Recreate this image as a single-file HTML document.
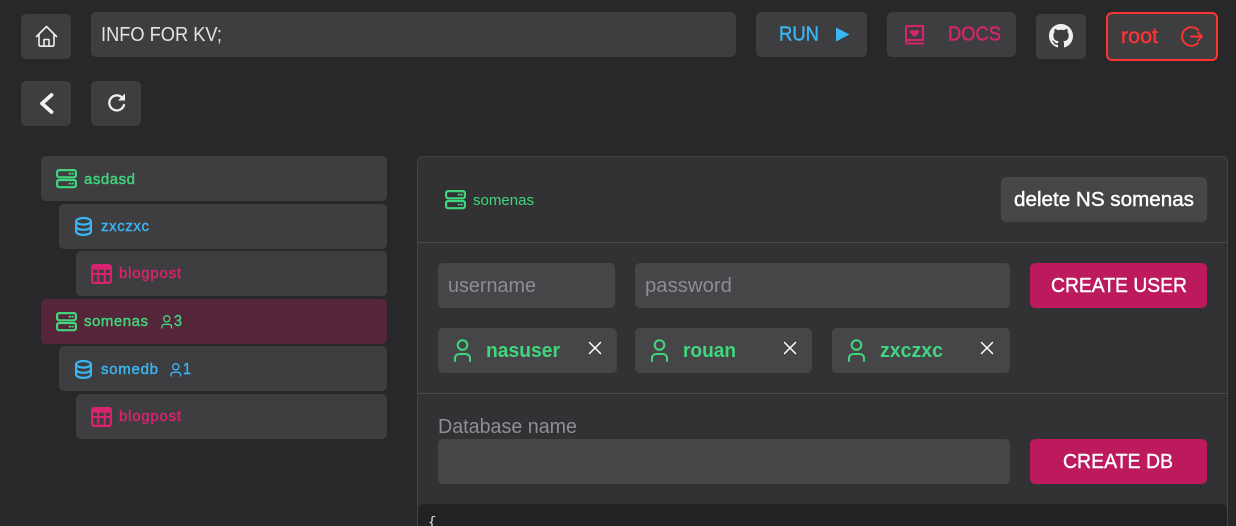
<!DOCTYPE html>
<html lang="en"><head><meta charset="utf-8"><title>KV</title>
<style>
html,body{margin:0;padding:0;width:1236px;height:526px;overflow:hidden;background:#28282a}
svg{display:block}
text{font-family:"Liberation Sans",sans-serif;white-space:pre}
.m{stroke-width:.4px;paint-order:stroke}
.g{fill:#41d67e;stroke:#41d67e}
.b{fill:#38b6f5;stroke:#38b6f5}
.p{fill:#d8246f;stroke:#d8246f}
.w{fill:#fff;stroke:#fff}
.r{fill:#f33;stroke:#f33}
.nos{stroke:none}
.c{font-weight:bold;stroke:none}
.ph{fill:#8b8c97}
.ic{fill:none;stroke-linecap:round;stroke-linejoin:round}
</style></head><body>
<svg width="1236" height="526" viewBox="0 0 1236 526" xmlns="http://www.w3.org/2000/svg">
<defs>
<g id="srv" class="ic" stroke-width="2.200"><rect x="1.100" y="1.100" width="18.800" height="7.200" rx="2"/><rect x="1.100" y="11" width="18.800" height="7.200" rx="2"/><path d="M13.500 4.700h.7M16.200 4.700h.7M13.500 14.600h.7M16.200 14.600h.7" stroke-width="1.800"/></g>
<g id="db" class="ic" stroke-width="2.200"><ellipse cx="8.500" cy="4.300" rx="7.400" ry="3.300"/><path d="M1.100 4.300v10.200c0 1.900 3.300 3.400 7.400 3.400s7.400-1.500 7.400-3.400V4.300M1.100 9.500c0 1.900 3.300 3.300 7.400 3.300s7.400-1.400 7.400-3.300"/></g>
<g id="tbl" class="ic" stroke-width="2.200"><rect x="1.100" y="1.100" width="18.800" height="17.800" rx="2"/><path d="M1 3.500h19" stroke-width="4.500" stroke-linecap="butt"/><path d="M1 10h19M7.300 4v15M13.700 4v15" stroke-width="1.900" stroke-linecap="butt"/></g>
<g id="usr" class="ic" stroke-width="1.300"><circle cx="5.800" cy="3.800" r="3.100"/><path d="M1 13v-1.200C1 10 2.500 9.300 4 9.300h3.600c1.500 0 3 .7 3 2.500V13"/></g>
<g id="usrl" class="ic" stroke-width="2"><circle cx="8.500" cy="6" r="4.800"/><path d="M1 22v-2.500C1 16.500 3 15 5.500 15h6c2.500 0 4.500 1.500 4.500 4.500V22"/></g>
<g id="x" stroke="#fff" stroke-width="1.500" stroke-linecap="round"><path d="M-5.500-5.500 5.500 5.500M5.500-5.500-5.500 5.500"/></g>
</defs>

<!-- top bar -->
<rect x="21" y="14" width="50" height="45" rx="5" fill="#3e3e40"/>
<path class="ic" stroke="#eee" stroke-width="1.600" d="M36.500 36.500 46.500 26.500l10 10M39 34.500v10c0 1 .6 1.700 1.600 1.700h11.800c1 0 1.600-.7 1.600-1.700v-10M44 46v-6.500h5V46"/>
<rect x="91" y="12" width="645" height="45" rx="5" fill="#3e3e40"/>
<text x="101" y="41" font-size="20" fill="#e4e4e6" textLength="121" lengthAdjust="spacingAndGlyphs">INFO FOR KV;</text>

<rect x="756" y="12" width="111" height="45" rx="5" fill="#3e3e40"/>
<text class="m b" x="779" y="40.500" font-size="20.500" textLength="40" lengthAdjust="spacingAndGlyphs">RUN</text>
<path d="M836 27.500 849.500 34.500 836 41.500Z" fill="#38b6f5"/>

<rect x="887" y="12" width="129" height="45" rx="5" fill="#3e3e40"/>
<path class="ic" stroke="#d8246f" stroke-width="2" d="M906 42V27.500c0-1 .6-1.500 1.500-1.500H923v14h-15.500c-1 0-1.500.5-1.500 1.500s.5 2 1.500 2H923"/>
<path d="M914.500 37l-4-3.700c-1.800-2 .7-4.700 4-2.300 3.300-2.400 5.800.3 4 2.300Z" fill="#d8246f"/>
<text class="m p" x="948" y="40.500" font-size="20.500" textLength="53" lengthAdjust="spacingAndGlyphs">DOCS</text>

<rect x="1036" y="14" width="50" height="45" rx="5" fill="#3e3e40"/>
<g transform="translate(1049 24)"><path fill="#efefef" d="M12 0C5.370 0 0 5.370 0 12c0 5.310 3.435 9.795 8.205 11.385.6.105.825-.255.825-.57 0-.285-.015-1.230-.015-2.235-3.015.555-3.795-.735-4.035-1.410-.135-.345-.72-1.410-1.230-1.695-.42-.225-1.020-.780-.015-.795.945-.015 1.620.870 1.845 1.230 1.080 1.815 2.805 1.305 3.495.99.105-.78.420-1.305.765-1.605-2.670-.3-5.460-1.335-5.460-5.925 0-1.305.465-2.385 1.230-3.225-.12-.3-.54-1.530.12-3.180 0 0 1.005-.315 3.300 1.230.96-.27 1.980-.405 3-.405s2.040.135 3 .405c2.295-1.560 3.300-1.230 3.300-1.230.66 1.650.24 2.880.12 3.180.765.84 1.230 1.905 1.230 3.225 0 4.605-2.805 5.625-5.475 5.925.435.375.81 1.095.81 2.220 0 1.605-.015 2.895-.015 3.300 0 .315.225.69.825.57A12.020 12.020 0 0 0 24 12c0-6.630-5.370-12-12-12Z"/></g>

<rect x="1107" y="13" width="110" height="47" rx="5" fill="#3e3e40" stroke="#f33" stroke-width="2"/>
<text class="m r" x="1121" y="43" font-size="21" textLength="37" lengthAdjust="spacingAndGlyphs">root</text>
<path class="ic" stroke="#f33" stroke-width="1.900" d="M1198 30a9.300 9.300 0 1 0 0 13M1191 36.500h11M1198 32.500l4 4-4 4"/>

<rect x="21" y="81" width="50" height="45" rx="5" fill="#3e3e40"/>
<path class="ic" stroke="#f2f2f2" stroke-width="3.800" d="M51.500 95 42 103.500 51.500 112"/>
<rect x="91" y="81" width="50" height="45" rx="5" fill="#3e3e40"/>
<path class="ic" stroke="#eee" stroke-width="2.300" d="M124 105a7.500 7.500 0 1 1-2-7.500"/>
<path d="M118 100.500h7v-7Z" fill="#eee"/>

<!-- tree -->
<rect x="41" y="156" width="346" height="45" rx="5" fill="#3e3e40"/>
<use href="#srv" x="56" y="169" stroke="#41d67e"/>
<text class="m g" x="84" y="184" font-size="15" textLength="51" lengthAdjust="spacing">asdasd</text>

<rect x="59" y="204" width="328" height="45" rx="5" fill="#3e3e40"/>
<use href="#db" x="75" y="217" stroke="#38b6f5"/>
<text class="m b" x="101" y="231" font-size="15" textLength="48" lengthAdjust="spacing">zxczxc</text>

<rect x="76" y="251" width="311" height="45" rx="5" fill="#3e3e40"/>
<use href="#tbl" x="91" y="264" stroke="#d8246f"/>
<text class="m p" x="119" y="278" font-size="15" textLength="62" lengthAdjust="spacing">blogpost</text>

<rect x="41" y="299" width="346" height="45" rx="5" fill="#552539"/>
<use href="#srv" x="56" y="312" stroke="#41d67e"/>
<text class="m g" x="84" y="326" font-size="15" textLength="64" lengthAdjust="spacing">somenas</text>
<use href="#usr" x="161" y="315" stroke="#41d67e"/>
<text class="m g" x="174" y="326" font-size="15.500" textLength="8" lengthAdjust="spacingAndGlyphs">3</text>

<rect x="59" y="346" width="328" height="45" rx="5" fill="#3e3e40"/>
<use href="#db" x="75" y="360" stroke="#38b6f5"/>
<text class="m b" x="101" y="374" font-size="15" textLength="57" lengthAdjust="spacing">somedb</text>
<use href="#usr" x="170" y="363" stroke="#38b6f5"/>
<text class="m b" x="183" y="374" font-size="15.500" textLength="8" lengthAdjust="spacingAndGlyphs">1</text>

<rect x="76" y="394" width="311" height="45" rx="5" fill="#3e3e40"/>
<use href="#tbl" x="91" y="407" stroke="#d8246f"/>
<text class="m p" x="119" y="421" font-size="15" textLength="62" lengthAdjust="spacing">blogpost</text>

<!-- panel -->
<rect x="417.500" y="156.500" width="810" height="380" rx="5" fill="#323234" stroke="#434345"/>
<rect x="418" y="242" width="809" height="1" fill="#4a4a4c"/>
<rect x="418" y="393" width="809" height="1" fill="#4a4a4c"/>

<use href="#srv" x="445" y="190" stroke="#41d67e"/>
<text class="g nos" x="473" y="205" font-size="14.500" textLength="61" lengthAdjust="spacingAndGlyphs">somenas</text>
<rect x="1001" y="177" width="206" height="45" rx="5" fill="#464648"/>
<text class="m w" x="1014" y="206" font-size="20" textLength="180" lengthAdjust="spacingAndGlyphs">delete NS somenas</text>

<rect x="438" y="263" width="177" height="45" rx="5" fill="#464648"/>
<text class="ph" x="448" y="292" font-size="20.500" textLength="88" lengthAdjust="spacingAndGlyphs">username</text>
<rect x="635" y="263" width="375" height="45" rx="5" fill="#464648"/>
<text class="ph" x="645" y="292" font-size="20.500" textLength="87" lengthAdjust="spacingAndGlyphs">password</text>
<rect x="1030" y="263" width="177" height="45" rx="5" fill="#bc1a5c"/>
<text class="m w" x="1051" y="292" font-size="20.500" textLength="136" lengthAdjust="spacingAndGlyphs">CREATE USER</text>

<rect x="438" y="328" width="179" height="45" rx="5" fill="#464648"/>
<use href="#usrl" x="454" y="339" stroke="#41d67e"/>
<text class="g c" x="486" y="357" font-size="20" textLength="74" lengthAdjust="spacingAndGlyphs">nasuser</text>
<use href="#x" x="595" y="348"/>

<rect x="635" y="328" width="177" height="45" rx="5" fill="#464648"/>
<use href="#usrl" x="651" y="339" stroke="#41d67e"/>
<text class="g c" x="683" y="357" font-size="20" textLength="53" lengthAdjust="spacingAndGlyphs">rouan</text>
<use href="#x" x="790" y="348"/>

<rect x="832" y="328" width="178" height="45" rx="5" fill="#464648"/>
<use href="#usrl" x="848" y="339" stroke="#41d67e"/>
<text class="g c" x="880" y="357" font-size="20" textLength="63" lengthAdjust="spacingAndGlyphs">zxczxc</text>
<use href="#x" x="987" y="348"/>

<text x="438" y="433" font-size="20" fill="#8e8e94" textLength="139" lengthAdjust="spacingAndGlyphs">Database name</text>
<rect x="438" y="439" width="572" height="45" rx="5" fill="#464648"/>
<rect x="1030" y="439" width="177" height="45" rx="5" fill="#bc1a5c"/>
<text class="m w" x="1063" y="468" font-size="20.500" textLength="110" lengthAdjust="spacingAndGlyphs">CREATE DB</text>

<rect x="418" y="504" width="809" height="40" rx="5" fill="#222224"/>
<text x="428" y="526" font-size="14" fill="#e4e4e6" style="font-family:'Liberation Mono',monospace">{</text>
</svg>
</body></html>
